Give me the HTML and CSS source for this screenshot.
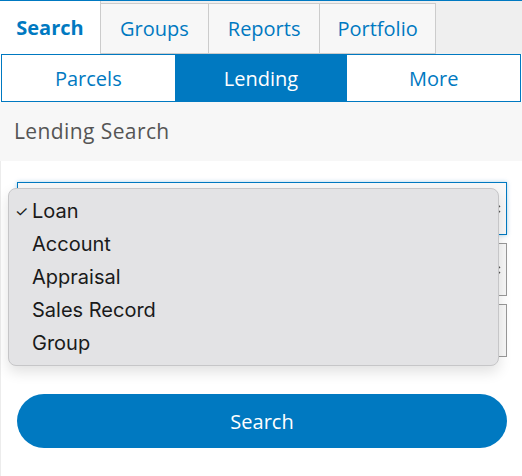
FILE: index.html
```html
<!DOCTYPE html>
<html lang="en">
<head>
    <meta charset="UTF-8">
    <meta name="viewport" content="width=device-width, initial-scale=1.0">
    <title>Lending Search</title>
    <link rel="stylesheet" href="styles.css">
</head>
<body>
    <div class="app">
        <nav class="tabs">
            <a class="tab active">Search</a>
            <a class="tab">Groups</a>
            <a class="tab">Reports</a>
            <a class="tab">Portfolio</a>
        </nav>

        <nav class="subnav">
            <a class="sub">Parcels</a>
            <a class="sub active">Lending</a>
            <a class="sub">More</a>
        </nav>

        <div class="panel-title">Lending Search</div>

        <form class="panel">
            <div class="field focused">
                <svg class="chevrons" width="8" height="14" viewBox="0 0 8 14"><path d="M1 5 L4 2 L7 5 M1 9 L4 12 L7 9" fill="none" stroke="#555" stroke-width="1.4"/></svg>
            </div>
            <div class="field">
                <svg class="chevrons" width="8" height="14" viewBox="0 0 8 14"><path d="M1 5 L4 2 L7 5 M1 9 L4 12 L7 9" fill="none" stroke="#555" stroke-width="1.4"/></svg>
            </div>
            <div class="field"></div>

            <button type="button" class="btn">Search</button>

            <!-- native select popup -->
            <ul class="menu">
                <li class="selected">Loan</li>
                <li>Account</li>
                <li>Appraisal</li>
                <li>Sales Record</li>
                <li>Group</li>
            </ul>
        </form>
    </div>
</body>
</html>
```

FILE: styles.css
```css
body {
    margin: 0;
    font-family: "Open Sans", Lato, sans-serif;
    background: #fff;
}
.app {
    width: 522px;
    border-top: 1px solid #0079c1;
}
.tabs {
    display: flex;
    height: 53px;
    background-color: #efefef;
}
.tab {
    display: flex;
    align-items: center;
    justify-content: center;
    box-sizing: border-box;
    margin-top: 2px;
    padding: 0 19px;
    background-color: #f7f7f7;
    border: 1px solid #ccc;
    border-left: none;
    color: #0079c1;
    font-size: 20px;
}
.tab:last-child {
    padding: 0 17px;
}
.tab.active {
    margin-top: 0;
    width: 101px;
    padding: 0;
    background-color: #fff;
    border: none;
    border-right: 1px solid #ccc;
    font-weight: bold;
}
.subnav {
    display: flex;
    height: 46px;
    margin: 0 1px;
    border: 1px solid #0079c1;
}
.sub {
    flex: 1;
    display: flex;
    align-items: center;
    justify-content: center;
    color: #0079c1;
    font-size: 20px;
}
.sub.active {
    background-color: #0079c1;
    color: #fff;
}
.panel-title {
    height: 59px;
    line-height: 59px;
    padding-left: 14px;
    background-color: #f7f7f7;
    color: #555;
    font-size: 21px;
    letter-spacing: 0.4px;
}
.panel {
    position: relative;
    padding: 21px 15px 28px 16px;
    border-left: 1px solid #ececec;
}
.field {
    position: relative;
    box-sizing: border-box;
    height: 53px;
    margin-bottom: 8px;
    background-color: #f8f8f8;
    border: 1px solid #999;
}
.field.focused {
    border-color: #0079c1;
    box-shadow: 0 0 4px rgba(0, 121, 193, 0.35);
}
.chevrons {
    position: absolute;
    right: 5px;
    top: 19px;
}
.btn {
    display: block;
    width: 100%;
    height: 54px;
    margin-top: 37px;
    border: none;
    border-radius: 27px;
    background-color: #0079c1;
    color: #fff;
    font-family: "Open Sans", Lato, sans-serif;
    font-size: 20px;
}
.menu {
    position: absolute;
    left: 7px;
    top: 27px;
    width: 491px;
    margin: 0;
    padding: 6px 0 5px;
    list-style: none;
    box-sizing: border-box;
    background-color: #e3e3e5;
    border: 1px solid #c6c6c8;
    border-radius: 8px;
    box-shadow: 0 6px 14px rgba(0, 0, 0, 0.12);
    font-family: Inter, "Liberation Sans", sans-serif;
    font-size: 20px;
    color: #1a1a1a;
}
.menu li {
    height: 33px;
    line-height: 33px;
    padding-left: 23px;
    position: relative;
}
.menu li.selected::before {
    content: "\2713";
    position: absolute;
    left: 6px;
    font-size: 15px;
}
```
